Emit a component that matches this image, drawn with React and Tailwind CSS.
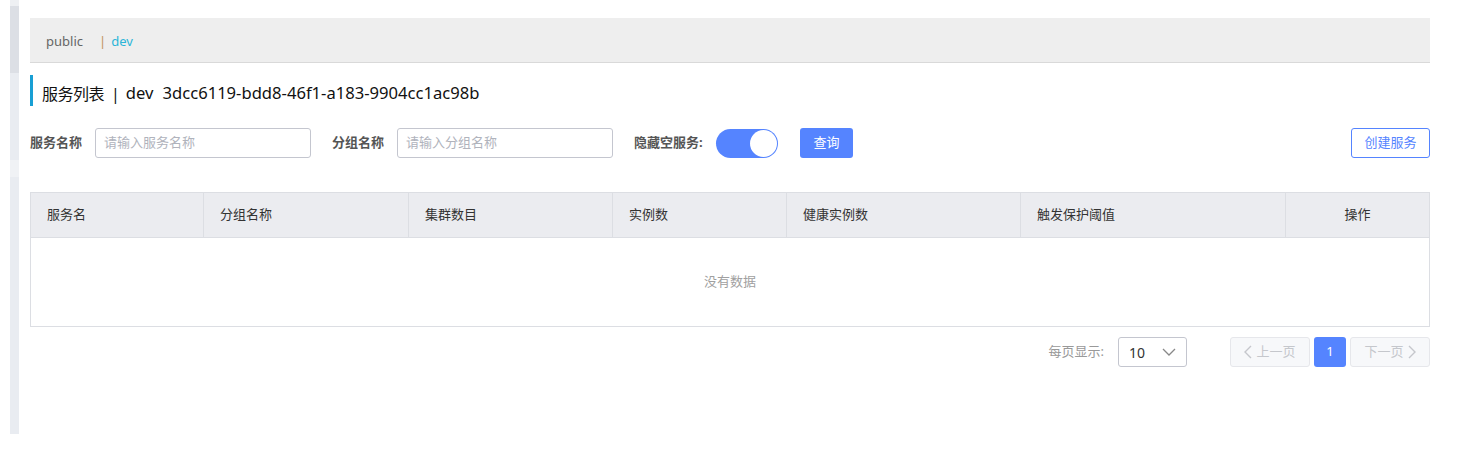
import React from "react";

const cols = [
  { label: "服务名", w: 173 },
  { label: "分组名称", w: 205 },
  { label: "集群数目", w: 204 },
  { label: "实例数", w: 174 },
  { label: "健康实例数", w: 234 },
  { label: "触发保护阈值", w: 265 },
  { label: "操作", w: 0, center: true },
];

export default function App() {
  return (
    <div
      className="flex w-[1462px] h-[457px] bg-white text-[#333]"
      style={{ fontFamily: '"Noto Sans", "Noto Sans CJK SC", sans-serif' }}
    >
      <div className="ml-[10px] w-[9px] h-[434px] flex flex-col">
        <div className="h-[6px] bg-[#eef0f3]" />
        <div className="h-[67px] bg-[#dcdfe5]" />
        <div className="h-[87px] bg-[#e9ecf1]" />
        <div className="h-[17px] bg-[#f0f2f5]" />
        <div className="flex-1 bg-[#e9ecf1]" />
      </div>
      <div className="ml-[11px] w-[1400px] flex flex-col pt-[18px]">
        <div className="h-[45px] bg-[#eeeeee] border-b border-[#d9d9d9] flex items-center pl-[16px] pt-[3px] text-[13px]">
          <span className="text-[#666]">public</span>
          <span className="ml-[16px] text-[#c0915e]">|</span>
          <span className="ml-[5px] text-[#2bb5d8]">dev</span>
        </div>
        <div className="mt-[12px] h-[31px] border-l-[3px] border-[#189fd4] flex items-center pl-[9px] pt-[6px] text-[16px] text-[#111]">
          <span className="tracking-[-0.5px]">服务列表</span>
          <span className="ml-[7px] mr-[6px]">|</span>
          <span className="text-[16.6px]">dev</span>
          <span className="ml-[9px] text-[16.6px]">3dcc6119-bdd8-46f1-a183-9904cc1ac98b</span>
        </div>
        <div className="mt-[22px] h-[30px] flex items-center text-[13px]">
          <span className="font-bold text-[#555] w-[65px]">服务名称</span>
          <div className="w-[216px] h-[30px] border border-[#c4c6cf] rounded-[3px] flex items-center pl-[8px] text-[#b0b3bc]">请输入服务名称</div>
          <span className="ml-[21px] font-bold text-[#555] w-[65px]">分组名称</span>
          <div className="w-[216px] h-[30px] border border-[#c4c6cf] rounded-[3px] flex items-center pl-[8px] text-[#b0b3bc]">请输入分组名称</div>
          <span className="ml-[21px] font-bold text-[#555] w-[82px]">隐藏空服务:</span>
          <div className="w-[62px] h-[29px] rounded-full bg-[#5584ff] relative">
            <div className="absolute right-[1px] top-[1px] w-[27px] h-[27px] rounded-full bg-white" />
          </div>
          <div className="ml-[22px] w-[53px] h-[30px] rounded-[3px] bg-[#5584ff] text-white flex items-center justify-center">查询</div>
          <div className="ml-auto w-[79px] h-[30px] rounded-[3px] border border-[#5584ff] text-[#5584ff] flex items-center justify-center">创建服务</div>
        </div>
        <div className="mt-[34px] border border-[#dcdee3]">
          <div className="h-[45px] bg-[#ebecf0] border-b border-[#dcdee3] flex text-[13px] text-[#333]">
            {cols.map((c, i) => (
              <div
                key={i}
                className={
                  c.center
                    ? "flex-1 flex items-center justify-center"
                    : "flex items-center pl-[16px] border-r border-[#dcdee3] shrink-0"
                }
                style={c.center ? undefined : { width: c.w }}
              >
                {c.label}
              </div>
            ))}
          </div>
          <div className="h-[88px] flex items-center justify-center text-[13px] text-[#a0a0a0]">没有数据</div>
        </div>
        <div className="mt-[10px] h-[30px] flex items-center justify-end text-[13px]">
          <span className="text-[#999] mr-[14px]">每页显示:</span>
          <div className="w-[69px] h-[30px] border border-[#c4c6cf] rounded-[3px] flex items-center px-[10px] text-[14px] text-[#333]">
            <span>10</span>
            <svg className="ml-auto" width="14" height="10" viewBox="0 0 14 10" fill="none">
              <path d="M1 2l6 6 6-6" stroke="#888" strokeWidth="1.3" />
            </svg>
          </div>
          <div className="ml-[43px] w-[80px] h-[30px] border border-[#e6e7eb] bg-[#f7f8fa] rounded-[3px] flex items-center justify-center text-[#c5c7cc] gap-[4px]">
            <svg width="8" height="14" viewBox="0 0 8 14" fill="none">
              <path d="M7 1L1 7l6 6" stroke="#c5c7cc" strokeWidth="1.4" />
            </svg>
            <span>上一页</span>
          </div>
          <div className="ml-[4px] w-[32px] h-[30px] rounded-[3px] bg-[#5584ff] text-white flex items-center justify-center">1</div>
          <div className="ml-[4px] w-[80px] h-[30px] border border-[#e6e7eb] bg-[#f7f8fa] rounded-[3px] flex items-center justify-center text-[#c5c7cc] gap-[4px]">
            <span>下一页</span>
            <svg width="8" height="14" viewBox="0 0 8 14" fill="none">
              <path d="M1 1l6 6-6 6" stroke="#c5c7cc" strokeWidth="1.4" />
            </svg>
          </div>
        </div>
      </div>
    </div>
  );
}
